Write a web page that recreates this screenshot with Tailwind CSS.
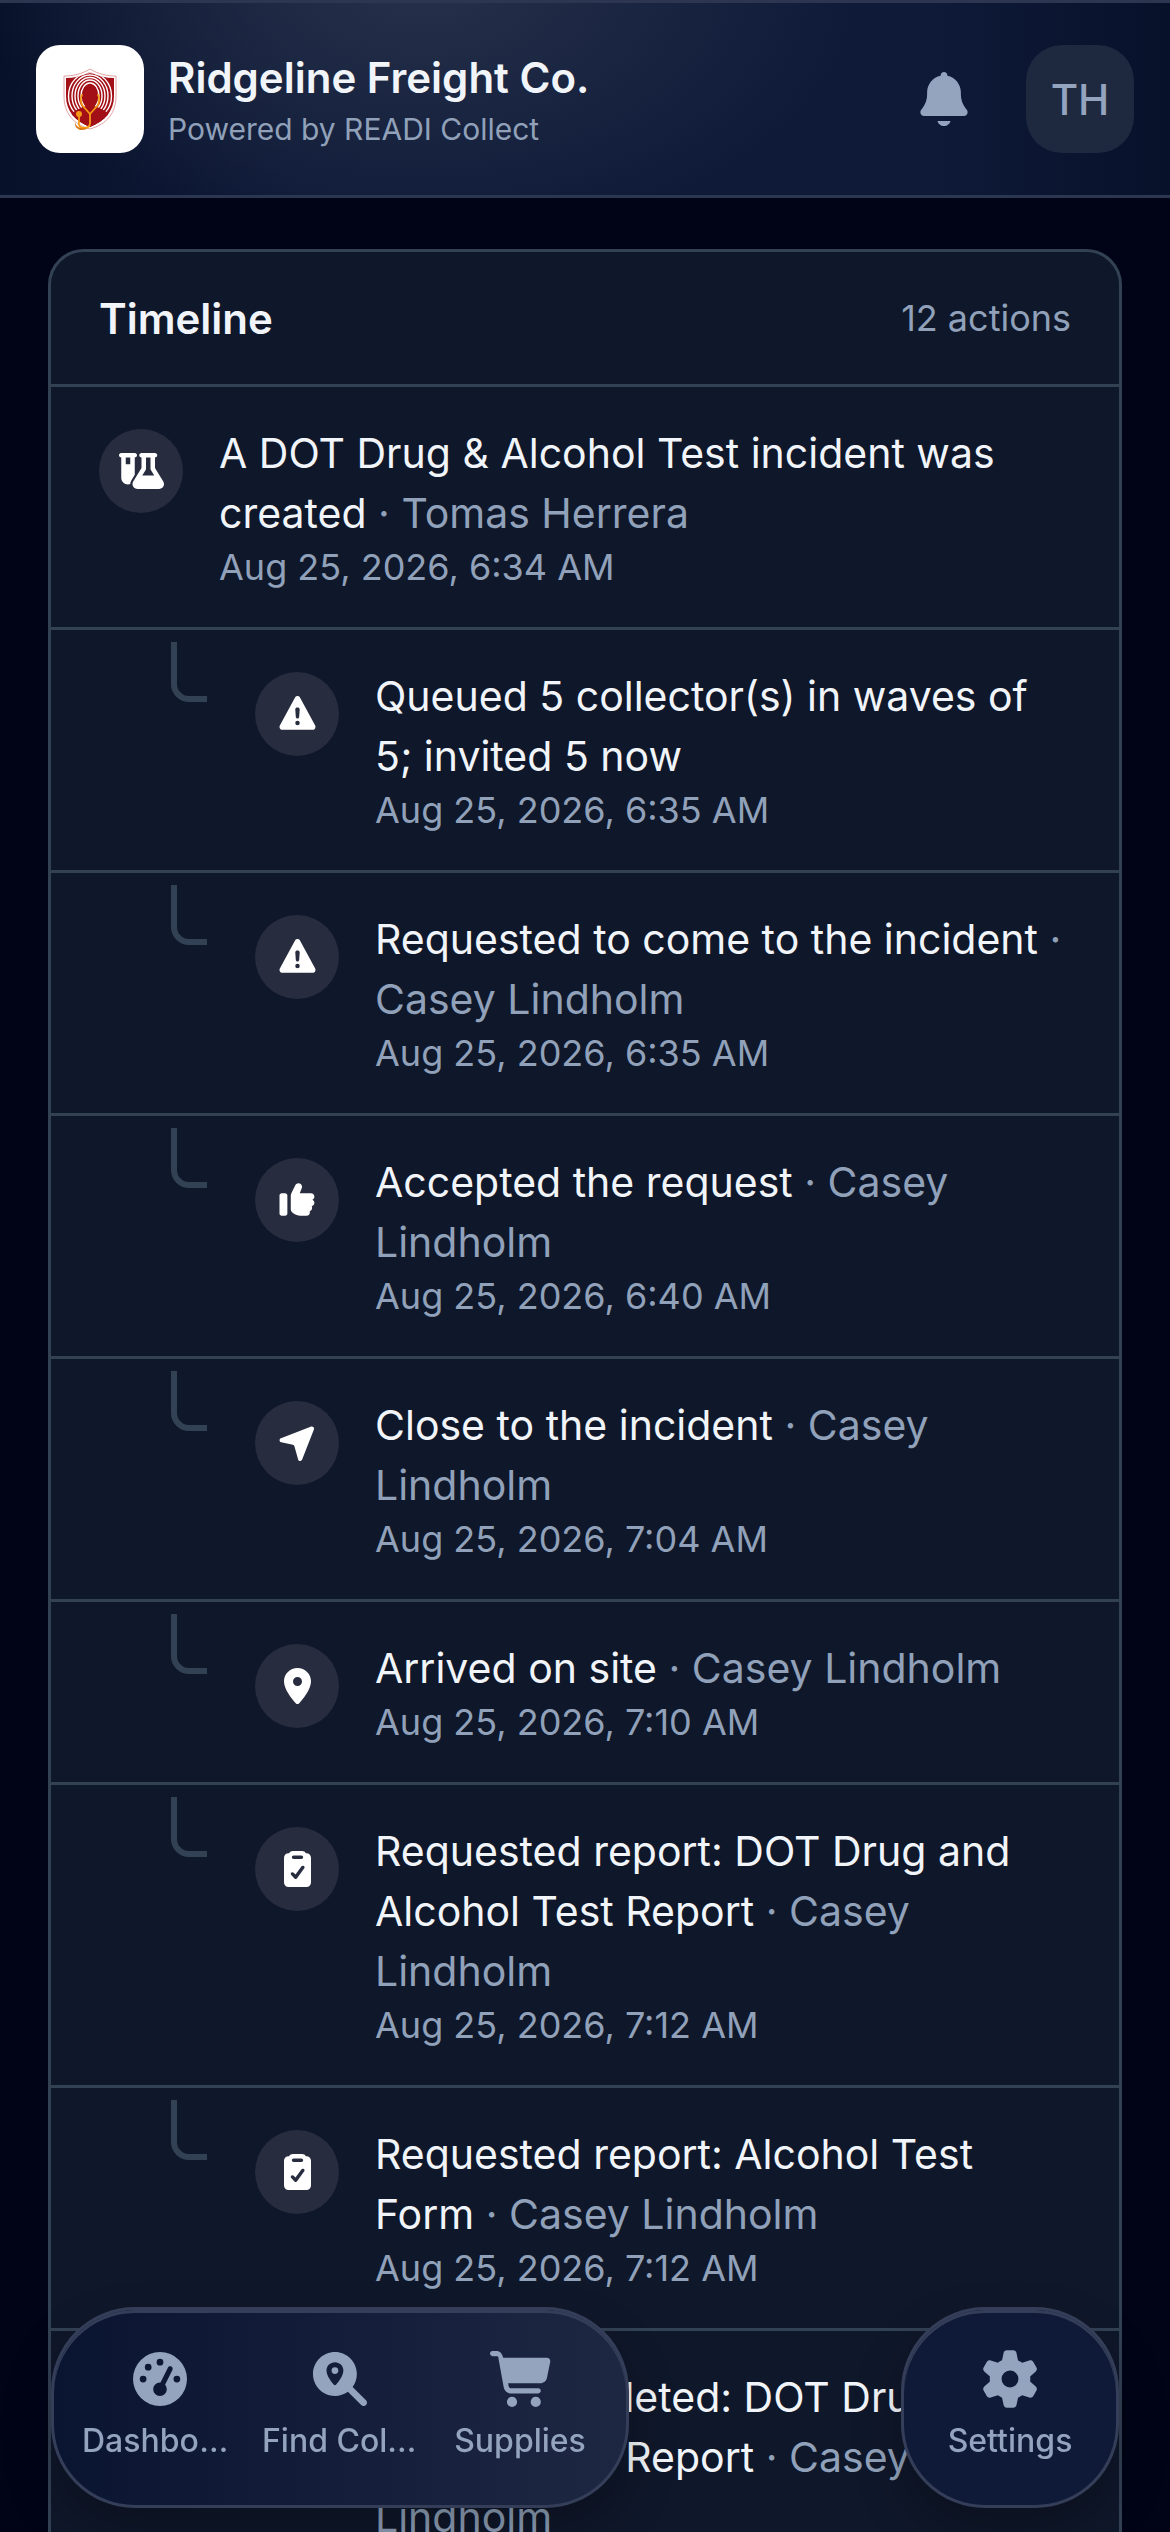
<!DOCTYPE html>
<html lang="en">
<head>
    <meta charset="UTF-8">
    <meta name="viewport" content="width=device-width, initial-scale=1.0">
    <title>Timeline | Ridgeline Freight Co.</title>
    <script src="https://cdn.jsdelivr.net/npm/@tailwindcss/browser@4"></script>
</head>
<body class="h-screen overflow-hidden bg-[#010417] font-['Inter',sans-serif] text-slate-100">
    <!-- icon sprite -->
    <svg class="hidden">
        <symbol id="bell" viewBox="0 0 448 512"><path d="M224 0c-17.7 0-32 14.3-32 32l0 3.2C119 50 64 114.6 64 192l0 21.7c0 48.1-16.4 94.8-46.4 132.4L7.8 358.3C2.7 364.6 0 372.4 0 380.5 0 400.1 15.9 416 35.5 416l376.9 0c19.6 0 35.5-15.9 35.5-35.5 0-8.1-2.7-15.9-7.8-22.2l-9.8-12.2C400.4 308.5 384 261.8 384 213.7l0-21.7c0-77.4-55-142-128-156.8l0-3.2c0-17.7-14.3-32-32-32zM162 464c7.1 27.6 32.2 48 62 48s54.9-20.4 62-48l-124 0z"/></symbol>
        <symbol id="flask" viewBox="0 0 640 512"><path d="M175 389.4c-9.8 16-15 34.3-15 53.1c-10 3.5-20.8 5.5-32 5.5c-53 0-96-43-96-96V64C14.3 64 0 49.7 0 32S14.3 0 32 0H224c17.7 0 32 14.3 32 32s-14.3 32-32 32V309.9l-49 79.6zM96 64v96h64V64H96zM352 0H480h32c17.7 0 32 14.3 32 32s-14.3 32-32 32V214.9L629.7 406.2c6.7 10.9 10.3 23.5 10.3 36.4c0 38.3-31.1 69.4-69.4 69.4H261.4c-38.3 0-69.4-31.1-69.4-69.4c0-12.8 3.6-25.4 10.3-36.4L320 214.9V64c-17.7 0-32-14.3-32-32s14.3-32 32-32h32zm32 64V224c0 5.9-1.6 11.7-4.7 16.8L330.5 320h171l-48.8-79.2c-3.1-5-4.7-10.8-4.7-16.8V64H384z"/></symbol>
        <symbol id="warning" viewBox="0 0 512 512"><path d="M256 0c14.7 0 28.2 8.1 35.2 21l216 400c6.7 12.4 6.4 27.4-.8 39.5S486.1 480 472 480L40 480c-14.1 0-27.2-7.4-34.4-19.5s-7.5-27.1-.8-39.5l216-400c7-12.9 20.5-21 35.2-21zm0 352a32 32 0 1 0 0 64 32 32 0 1 0 0-64zm0-192c-18.2 0-32.7 15.5-31.4 33.7l7.4 104c.9 12.5 11.4 22.3 23.9 22.3 12.6 0 23-9.7 23.9-22.3l7.4-104c1.3-18.2-13.1-33.7-31.4-33.7z"/></symbol>
        <symbol id="thumb" viewBox="0 0 512 512"><path d="M80 160c17.7 0 32 14.3 32 32l0 256c0 17.7-14.3 32-32 32l-48 0c-17.7 0-32-14.3-32-32L0 192c0-17.7 14.3-32 32-32l48 0zM270.6 16C297.9 16 320 38.1 320 65.4l0 4.2c0 6.8-1.3 13.6-3.8 19.9L288 160 448 160c26.5 0 48 21.5 48 48 0 19.7-11.9 36.6-28.9 44 17 7.4 28.9 24.3 28.9 44 0 23.4-16.8 42.9-39 47.1 4.4 7.3 7 15.8 7 24.9 0 22.2-15 40.8-35.4 46.3 2.2 5.5 3.4 11.5 3.4 17.7 0 26.5-21.5 48-48 48l-87.9 0c-36.3 0-71.6-12.4-99.9-35.1L184 435.2c-15.2-12.1-24-30.5-24-50l0-186.6c0-14.9 3.5-29.6 10.1-42.9L226.3 43.3C234.7 26.6 251.8 16 270.6 16z"/></symbol>
        <symbol id="arrow" viewBox="0 0 512 512"><path d="M442 26L21 188C-7 199-6 240 24 246L190 280Q208 284 212 302L265 490C273 518 312 520 322 492L488 68C500 38 472 14 442 26z"/></symbol>
        <symbol id="pin" viewBox="0 0 384 512"><path d="M0 188.6C0 84.4 86 0 192 0S384 84.4 384 188.6c0 119.3-120.2 262.3-170.4 316.8-11.8 12.8-31.5 12.8-43.3 0-50.2-54.5-170.4-197.5-170.4-316.8zM192 256a64 64 0 1 0 0-128 64 64 0 1 0 0 128z"/></symbol>
        <symbol id="clipboard" viewBox="0 0 384 512"><path d="M256 0c23.7 0 44.4 12.9 55.4 32l8.6 0c35.3 0 64 28.7 64 64l0 352c0 35.3-28.7 64-64 64L64 512c-35.3 0-64-28.7-64-64L0 96C0 60.7 28.7 32 64 32l8.6 0C83.6 12.9 104.3 0 128 0L256 0zm26.9 212.6c-10.7-7.8-25.7-5.4-33.5 5.3l-85.6 117.7-26.5-27.4c-9.2-9.5-24.4-9.8-33.9-.6s-9.8 24.4-.6 33.9l46.4 48c4.9 5.1 11.8 7.8 18.9 7.3s13.6-4.1 17.8-9.8L288.2 246.1c7.8-10.7 5.4-25.7-5.3-33.5zM136 64c-13.3 0-24 10.7-24 24s10.7 24 24 24l112 0c13.3 0 24-10.7 24-24s-10.7-24-24-24L136 64z"/></symbol>
        <symbol id="gauge" viewBox="0 0 512 512"><path fill-rule="evenodd" d="M0 256a256 256 0 1 1 512 0A256 256 0 1 1 0 256zM288 96a32 32 0 1 0-64 0 32 32 0 1 0 64 0zM256 416c35.3 0 64-28.7 64-64 0-16.2-6-31.1-16-42.3l69.5-138.9c5.9-11.9 1.1-26.3-10.7-32.2s-26.3-1.1-32.2 10.7L261.1 288.2c-1.7-.1-3.4-.2-5.1-.2-35.3 0-64 28.7-64 64s28.7 64 64 64zM176 144a32 32 0 1 0-64 0 32 32 0 1 0 64 0zM96 288a32 32 0 1 0 0-64 32 32 0 1 0 0 64zm352-32a32 32 0 1 0-64 0 32 32 0 1 0 64 0z"/></symbol>
        <symbol id="find" viewBox="0 0 512 512"><path fill-rule="evenodd" d="M416 208c0 45.9-14.9 88.3-40 122.7L502.6 457.4c12.5 12.5 12.5 32.8 0 45.3s-32.8 12.5-45.3 0L330.7 376c-34.4 25.2-76.8 40-122.7 40C93.1 416 0 322.9 0 208S93.1 0 208 0S416 93.1 416 208zM208 96c-44 0-80 34-80 78 0 54 48 112 70 137 6 6 14 6 20 0 22-25 70-83 70-137 0-44-36-78-80-78zM208 144a32 32 0 1 0 0 64 32 32 0 1 0 0-64z"/></symbol>
        <symbol id="cart" viewBox="0 -16 576 528"><path d="M24-16C10.7-16 0-5.3 0 8S10.7 32 24 32l45.3 0c3.9 0 7.2 2.8 7.9 6.6l52.1 286.3c6.2 34.2 36 59.1 70.8 59.1L456 384c13.3 0 24-10.7 24-24s-10.7-24-24-24l-255.9 0c-11.6 0-21.5-8.3-23.6-19.7l-5.1-28.3 303.6 0c30.8 0 57.2-21.9 62.9-52.2L568.9 85.9C572.6 66.2 557.5 48 537.4 48L124.7 48l-.4-2C119.4 19.4 96.3-16 69.3-16L24-16zM208 512a48 48 0 1 0 0-96 48 48 0 1 0 0 96zm224 0a48 48 0 1 0 0-96 48 48 0 1 0 0 96z"/></symbol>
        <symbol id="gear" viewBox="0 -16 512 544"><path d="M195.1 9.5C198.1-5.3 211.2-16 226.4-16l59.8 0c15.2 0 28.3 10.7 31.3 25.5L332 79.5c14.1 6 27.3 13.7 39.3 22.8l67.8-22.5c14.4-4.8 30.2 1.2 37.8 14.4l29.9 51.8c7.6 13.2 4.9 29.8-6.5 39.9L447 233.3c.9 7.4 1.3 15 1.3 22.7s-.5 15.3-1.3 22.7l53.4 47.5c11.4 10.1 14 26.8 6.5 39.9l-29.9 51.8c-7.6 13.1-23.4 19.2-37.8 14.4l-67.8-22.5c-12.1 9.1-25.3 16.7-39.3 22.8l-14.4 69.9c-3.1 14.9-16.2 25.5-31.3 25.5l-59.8 0c-15.2 0-28.3-10.7-31.3-25.5l-14.4-69.9c-14.1-6-27.2-13.7-39.3-22.8L73.5 432.3c-14.4 4.8-30.2-1.2-37.8-14.4L5.8 366.1c-7.6-13.2-4.9-29.8 6.5-39.9l53.4-47.5c-.9-7.4-1.3-15-1.3-22.7s.5-15.3 1.3-22.7L12.3 185.8c-11.4-10.1-14-26.8-6.5-39.9L35.7 94.1c7.6-13.2 23.4-19.2 37.8-14.4l67.8 22.5c12.1-9.1 25.3-16.7 39.3-22.8L195.1 9.5zM256.3 336a80 80 0 1 0-.6-160 80 80 0 1 0 .6 160z"/></symbol>
    </svg>

    <header class="flex items-center gap-6 border-y-3 border-[#2c3650] bg-[#0c1733] bg-[radial-gradient(ellipse_440px_260px_at_36%_-10%,#26304a,transparent),linear-gradient(90deg,#08112a,#0e1a38_25%,#0e1a38_80%,#08112a)] px-9 py-[42px]">
        <div class="flex size-27 shrink-0 items-center justify-center rounded-3xl bg-white">
            <svg class="h-[62px] w-14" viewBox="0 0 56 62">
                <defs>
                    <clipPath id="shield"><path d="M28 4C20 8 12 10 4 10V28C4 43 13 53 28 59C43 53 52 43 52 28V10C44 10 36 8 28 4z"/></clipPath>
                </defs>
                <path d="M28 1C20 6 11 8 2 8V28C2 45 11 56 28 61C45 56 54 45 54 28V8C45 8 36 6 28 1z" fill="#fff" stroke="#e2a3a3"/>
                <g clip-path="url(#shield)">
                    <path fill="#a30f16" d="M0 0h56v62H0z"/>
                    <g fill="none" stroke="#fff" stroke-width="1.4">
                        <ellipse cx="28" cy="28" rx="9" ry="13"/>
                        <ellipse cx="28" cy="28" rx="12" ry="16"/>
                        <ellipse cx="28" cy="28" rx="15" ry="18.5"/>
                        <ellipse cx="28" cy="28" rx="18" ry="21"/>
                        <ellipse cx="28" cy="28" rx="21.5" ry="23.5"/>
                    </g>
                    <path fill="#a30f16" d="M28 17c-5 0-8 4-7 10 0 4 1 7 3 9v2C18 40 10 43 5 51v11h46V51c-5-8-13-11-19-13v-2c2-2 3-5 3-9 1-6-2-10-7-10z"/>
                </g>
                <g fill="none" stroke="#f59a14" stroke-width="1.8" stroke-linecap="round">
                    <path d="M20 27c-2 2-1 8 0 10l8 9 8-9c1-2 2-8 0-10"/>
                    <path d="M28 46v9c0 4-2 5-6 5s-6-3-5-6V46"/>
                </g>
                <circle cx="17" cy="46" r="3" fill="#f59a14"/>
                <path d="M13 54c1 6 7 7 13 6-5 4-14 2-13-6z" fill="#d9760d"/>
            </svg>
        </div>
        <div class="min-w-0 flex-1 pt-1.5">
            <h1 class="truncate text-[42px] leading-[54px] font-semibold">Ridgeline Freight Co.</h1>
            <p class="truncate text-[30px] leading-[48px] text-slate-400">Powered by READI Collect</p>
        </div>
        <button class="flex h-27 w-29 items-center justify-center text-[#94a3be]" aria-label="Notifications">
            <svg class="h-[54px] w-12" fill="currentColor"><use href="#bell"/></svg>
        </button>
        <button class="size-27 rounded-[36px] bg-[#1e293f] text-[42px] font-medium text-[#94a3be]">TH</button>
    </header>

    <main class="px-12 pt-[51px]">
        <section class="rounded-t-[36px] border-3 border-[#334155] bg-[#0f172a]">
            <div class="flex h-[135px] items-center justify-between border-b-3 border-[#334155] px-12">
                <h2 class="text-[42px] font-semibold">Timeline</h2>
                <p class="text-[36px] text-slate-400">12 actions</p>
            </div>
            <ul id="timeline"></ul>
        </section>
    </main>

    <nav class="fixed inset-x-[51px] bottom-6 flex items-stretch justify-between text-[#94a3be]">
        <div class="flex rounded-[84px] border-3 border-[#343e58] bg-linear-to-r from-[#0a1532] to-[#1e2742] px-4 py-[42px] shadow-[inset_0_3px_0_#343e58,0_24px_48px_rgb(0_0_0/0.25)]">
            <a href="#" class="flex w-45 flex-col items-center gap-3 px-3">
                <svg class="size-[54px]" fill="currentColor"><use href="#gauge"/></svg>
                <span class="w-full truncate text-center text-[32px] leading-[45px] font-medium">Dashboard</span>
            </a>
            <a href="#" class="flex w-45 flex-col items-center gap-3 px-3">
                <svg class="size-[54px]" fill="currentColor"><use href="#find"/></svg>
                <span class="w-full truncate text-center text-[32px] leading-[45px] font-medium">Find Collectors</span>
            </a>
            <a href="#" class="flex w-45 flex-col items-center gap-3 px-3">
                <svg class="-my-px h-14 w-[61px]" fill="currentColor"><use href="#cart"/></svg>
                <span class="w-full truncate text-center text-[32px] leading-[45px] font-medium">Supplies</span>
            </a>
        </div>
        <div class="flex rounded-[84px] border-3 border-[#343e58] bg-[#0f1a38] px-4 py-[42px] shadow-[inset_0_3px_0_#343e58,0_24px_48px_rgb(0_0_0/0.25)]">
            <a href="#" class="flex w-45 flex-col items-center gap-3 px-3">
                <svg class="-my-0.5 h-[58px] w-[54px]" fill="currentColor"><use href="#gear"/></svg>
                <span class="w-full truncate text-center text-[32px] leading-[45px] font-medium">Settings</span>
            </a>
        </div>
    </nav>

    <script>
        const actions = [
            { icon: 'flask', text: 'A DOT Drug &amp; Alcohol Test incident was created', by: 'Tomas Herrera', time: '6:34 AM', root: true },
            { icon: 'warning', text: 'Queued 5 collector(s) in waves of 5; invited 5 now', time: '6:35 AM' },
            { icon: 'warning', text: 'Requested to come to the incident', by: 'Casey Lindholm', time: '6:35 AM' },
            { icon: 'thumb', text: 'Accepted the request', by: 'Casey Lindholm', time: '6:40 AM' },
            { icon: 'arrow', text: 'Close to the incident', by: 'Casey Lindholm', time: '7:04 AM' },
            { icon: 'pin', text: 'Arrived on site', by: 'Casey Lindholm', time: '7:10 AM' },
            { icon: 'clipboard', text: 'Requested report: DOT Drug and Alcohol Test Report', by: 'Casey Lindholm', time: '7:12 AM' },
            { icon: 'clipboard', text: 'Requested report: Alcohol Test Form', by: 'Casey Lindholm', time: '7:12 AM' },
            { icon: 'clipboard', text: 'Report completed: DOT Drug and Alcohol Test Report', by: 'Casey Lindholm', time: '7:26 AM' },
        ];

        document.getElementById('timeline').innerHTML = actions.map(a => `
            <li class="flex items-start border-b-3 border-[#334155] py-9 pr-12 ${a.root ? 'pl-12' : 'pl-[120px]'}">
                ${a.root ? '' : '<span class="-mt-6 mr-12 h-15 w-9 shrink-0 rounded-bl-[18px] border-b-6 border-l-6 border-[#334155]"></span>'}
                <span class="mt-1.5 mr-9 flex size-21 shrink-0 items-center justify-center rounded-full bg-[#272c3f] text-white">
                    <svg class="h-9 w-[45px]" fill="currentColor"><use href="#${a.icon}"/></svg>
                </span>
                <div class="min-w-0 flex-1">
                    <p class="text-[41px] leading-[60px]">${a.text}${a.by ? ` <span class="text-slate-400">· ${a.by}</span>` : ''}</p>
                    <p class="text-[36px] leading-[48px] text-slate-400">Aug 25, 2026, ${a.time}</p>
                </div>
            </li>
        `).join('');
    </script>
</body>
</html>
